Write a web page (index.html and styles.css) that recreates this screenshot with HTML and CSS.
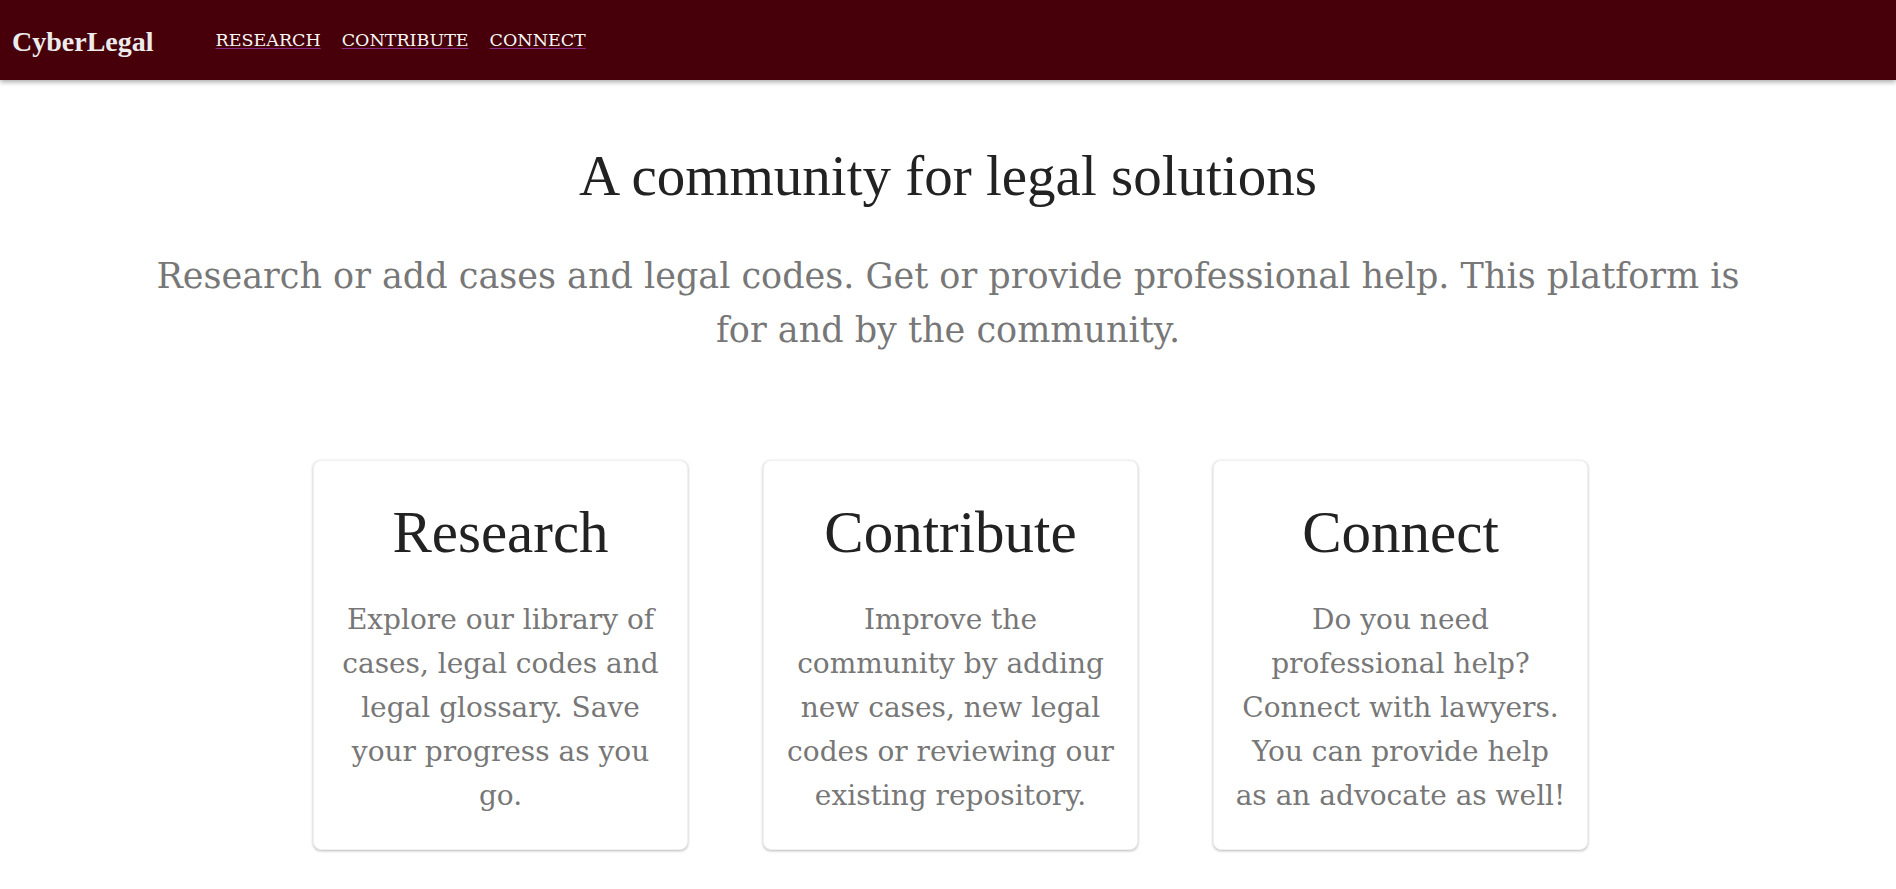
FILE: index.html
```html
<!DOCTYPE html>
<html lang="en">
<head>
<meta charset="utf-8">
<title>CyberLegal</title>
<link rel="stylesheet" href="styles.css">
</head>
<body>
<header class="topbar">
  <a class="brand" href="#">CyberLegal</a>
  <nav class="menu">
    <a href="#">RESEARCH</a>
    <a href="#">CONTRIBUTE</a>
    <a href="#">CONNECT</a>
  </nav>
</header>
<main class="page">
  <section class="hero">
    <h1 class="hero-title">A community for legal solutions</h1>
    <p class="hero-sub">Research or add cases and legal codes. Get or provide professional help. This platform is for and by the community.</p>
  </section>
  <section class="cards">
    <article class="card">
      <h2 class="card-title">Research</h2>
      <p class="card-text">Explore our library of cases, legal codes and legal glossary. Save your progress as you go.</p>
    </article>
    <article class="card">
      <h2 class="card-title">Contribute</h2>
      <p class="card-text">Improve the community by adding new cases, new legal codes or reviewing our existing repository.</p>
    </article>
    <article class="card">
      <h2 class="card-title">Connect</h2>
      <p class="card-text">Do you need professional help? Connect with lawyers. You can provide help as an advocate as well!</p>
    </article>
  </section>
</main>
</body>
</html>
```

FILE: styles.css
```css
* { box-sizing: border-box; }

html, body {
  margin: 0;
  padding: 0;
  background: #ffffff;
}

body {
  font-family: "DejaVu Serif", serif;
  color: #222;
}

.topbar {
  height: 80px;
  background: #47000a;
  display: flex;
  align-items: center;
  padding-left: 12px;
  box-shadow: 0 2px 5px rgba(0, 0, 0, 0.35);
  position: relative;
  z-index: 1;
}

.brand {
  font-family: "Liberation Serif", serif;
  font-weight: bold;
  font-size: 28px;
  color: #ececec;
  text-decoration: none;
  padding-top: 3px;
}

.menu {
  display: flex;
  gap: 21px;
  margin-left: 62px;
}

.menu a {
  font-family: "DejaVu Serif", serif;
  font-size: 17.5px;
  color: #f7f7f7;
  text-decoration: underline;
  text-decoration-color: #8a2a8a;
  text-underline-offset: 2px;
}

.page {
  padding-top: 64px;
}

.hero {
  text-align: center;
}

.hero-title {
  font-family: "Liberation Serif", serif;
  font-weight: normal;
  font-size: 57px;
  line-height: 64px;
  color: #222;
  margin: 0;
}

.hero-sub {
  font-family: "DejaVu Serif", serif;
  font-size: 35px;
  line-height: 54px;
  color: #777;
  max-width: 1630px;
  margin: 41px auto 0;
}

.cards {
  display: flex;
  justify-content: center;
  gap: 75px;
  margin-top: 103px;
  padding: 0 0 40px 5px;
}

.card {
  width: 375px;
  height: 390px;
  background: #fff;
  border-radius: 8px;
  border: 1px solid #f0f0f0;
  box-shadow: 0 1px 3px rgba(0, 0, 0, 0.28);
  padding: 36px 20px 20px;
  text-align: center;
}

.card-title {
  font-family: "Liberation Serif", serif;
  font-weight: normal;
  font-size: 59px;
  line-height: 71px;
  color: #222;
  margin: 0;
}

.card-text {
  font-family: "DejaVu Serif", serif;
  font-size: 28px;
  line-height: 44px;
  color: #777;
  margin: 30px 0 0;
}
```
